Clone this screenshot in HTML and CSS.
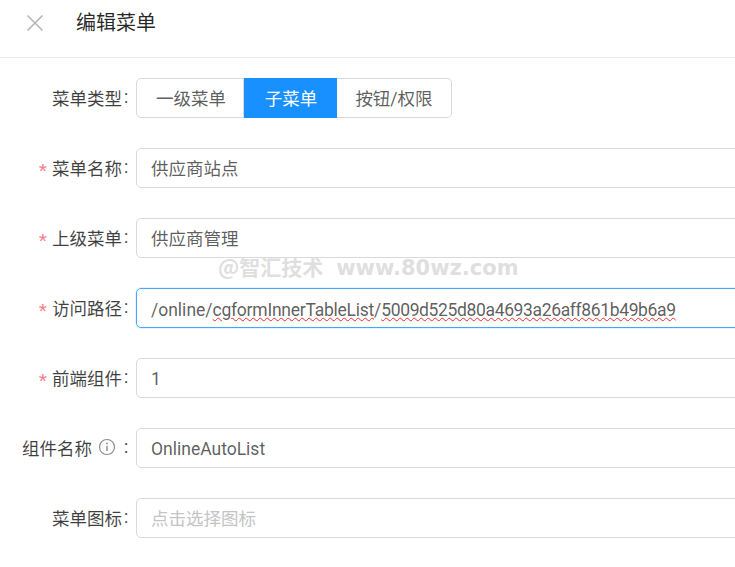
FILE: index.html
```html
<!DOCTYPE html>
<html lang="zh-CN">
<head>
<meta charset="utf-8">
<title>编辑菜单</title>
<link rel="stylesheet" href="styles.css">
</head>
<body>
<div class="drawer">
  <header class="head">
    <svg class="close" width="18" height="18" viewBox="0 0 18 18"><path d="M1.5 1.5L16.5 16.5M16.5 1.5L1.5 16.5" stroke="#b5b5b5" stroke-width="1.6" fill="none"/></svg>
    <h1 class="title">编辑菜单</h1>
  </header>
  <main class="form">
    <div class="row">
      <div class="label">菜单类型<span class="colon">:</span></div>
      <div class="radios">
        <span class="radio first">一级菜单</span>
        <span class="radio active">子菜单</span>
        <span class="radio last">按钮/权限</span>
      </div>
    </div>
    <div class="row">
      <div class="label"><span class="req">*</span>菜单名称<span class="colon">:</span></div>
      <div class="input">供应商站点</div>
    </div>
    <div class="row">
      <div class="label"><span class="req">*</span>上级菜单<span class="colon">:</span></div>
      <div class="input">供应商管理</div>
    </div>
    <div class="row">
      <div class="label"><span class="req">*</span>访问路径<span class="colon">:</span></div>
      <div class="input path focus">/online/<span class="spell word">cgformInnerTableList</span>/<span class="spell hash">5009d525d80a4693a26aff861b49b6a9</span></div>
    </div>
    <div class="row">
      <div class="label"><span class="req">*</span>前端组件<span class="colon">:</span></div>
      <div class="input latin">1</div>
    </div>
    <div class="row">
      <div class="label">组件名称
        <svg class="info" width="18" height="18" viewBox="0 0 18 18"><circle cx="9" cy="9" r="7.5" fill="none" stroke="#8c8c8c" stroke-width="1.2"/><path d="M9 7.8V13" stroke="#8c8c8c" stroke-width="1.4"/><circle cx="9" cy="5.4" r="0.9" fill="#8c8c8c"/></svg>
        <span class="colon wide">:</span></div>
      <div class="input latin">OnlineAutoList</div>
    </div>
    <div class="row">
      <div class="label">菜单图标<span class="colon">:</span></div>
      <div class="input placeholder">点击选择图标</div>
    </div>
  </main>
  <div class="watermark"><span class="mark-cn">@智汇技术</span><span class="mark-en">www.80wz.com</span></div>
</div>
</body>
</html>
```

FILE: styles.css
```css
html, body {
  margin: 0;
  padding: 0;
  height: 100%;
  overflow: hidden;
  background: #fff;
}
.drawer {
  position: relative;
  width: 735px;
  height: 567px;
  overflow: hidden;
  font-family: Roboto, "Noto Sans CJK SC", sans-serif;
  font-size: 17.5px;
  color: rgba(0, 0, 0, 0.65);
}
.head {
  display: flex;
  align-items: center;
  height: 57px;
  border-bottom: 1px solid #e8e8e8;
  padding-left: 26px;
}
.close {
  flex: none;
  margin-bottom: 12px;
}
.title {
  margin: 0 0 12px 32px;
  font-size: 20px;
  font-weight: 400;
  color: rgba(0, 0, 0, 0.85);
  line-height: 28px;
}
.form {
  display: flex;
  flex-direction: column;
  gap: 30px;
  padding-top: 20px;
}
.row {
  display: flex;
  align-items: center;
  height: 40px;
}
.label {
  flex: none;
  width: 130px;
  display: flex;
  justify-content: flex-end;
  align-items: center;
  white-space: nowrap;
  color: rgba(0, 0, 0, 0.75);
  position: relative;
  top: -1px;
}
.req {
  color: #f5222d;
  opacity: 0.6;
  font-size: 21px;
  line-height: 1;
  margin-right: 5px;
  position: relative;
  top: 3px;
  font-family: "Liberation Sans", sans-serif;
}
.colon {
  margin-left: 2px;
  width: 6px;
  text-align: left;
}
.colon.wide {
  margin-left: 8px;
}
.info {
  margin-left: 6px;
}
.radios {
  display: flex;
  height: 40px;
  margin-left: 6px;
}
.radio {
  display: flex;
  align-items: center;
  justify-content: center;
  box-sizing: border-box;
  height: 40px;
  padding-bottom: 2px;
  border: 1px solid #d9d9d9;
  border-left: 0;
}
.radio.first {
  width: 108px;
  padding-left: 2px;
  border-left: 1px solid #d9d9d9;
  border-radius: 5px 0 0 5px;
}
.radio.active {
  width: 93px;
  padding-left: 2px;
  background: #1890ff;
  border-color: #1890ff;
  color: #fff;
}
.radio.last {
  width: 115px;
  border-radius: 0 5px 5px 0;
}
.input {
  flex: none;
  width: 640px;
  height: 40px;
  margin-left: 6px;
  padding: 0 0 2px 14px;
  box-sizing: border-box;
  display: flex;
  align-items: center;
  white-space: pre;
  border: 1px solid #d9d9d9;
  border-radius: 5px;
}
.input.latin {
  padding: 2px 0 0 14px;
}
.input.path {
  padding: 4px 0 0 14px;
}
.input.focus {
  border-color: #40a9ff;
  box-shadow: 0 0 0 1px rgba(24, 144, 255, 0.1);
}
.input.placeholder {
  color: #c4c4c4;
}
.spell {
  text-decoration: underline wavy #e92c2c 1.2px;
  text-underline-offset: 1px;
}
.word {
  letter-spacing: -0.25px;
}
.hash {
  letter-spacing: -0.36px;
}
.watermark {
  position: absolute;
  left: 218px;
  top: 251px;
  display: flex;
  align-items: baseline;
  gap: 13px;
  font-weight: 700;
  color: #dfdfdf;
  white-space: nowrap;
}
.mark-cn {
  font-family: "Noto Sans CJK SC", sans-serif;
  font-size: 21px;
}
.mark-en {
  font-family: "DejaVu Sans", sans-serif;
  font-size: 21px;
}
```
